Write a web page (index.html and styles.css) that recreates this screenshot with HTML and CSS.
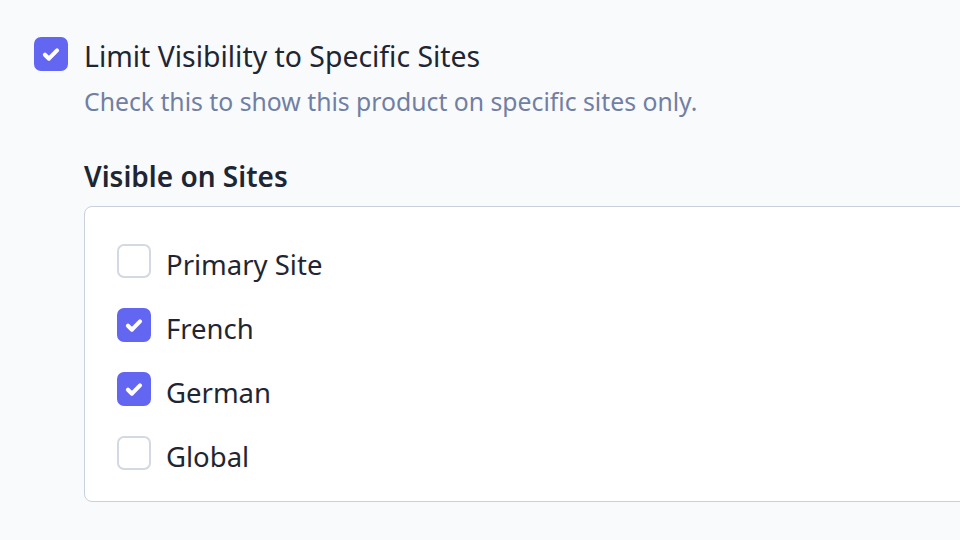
FILE: index.html
```html
<!DOCTYPE html>
<html lang="en">
<head>
<meta charset="utf-8">
<title>Site visibility</title>
<link rel="stylesheet" href="styles.css">
</head>
<body>
<div class="page">
  <label class="main-option">
    <span class="check checked">
      <svg viewBox="0 0 16 16" width="22" height="22"><path d="M3.6 8.5l2.9 2.9 5.9-6" fill="none" stroke="#fff" stroke-width="3" stroke-linecap="round" stroke-linejoin="round"/></svg>
    </span>
    <span class="main-label">Limit Visibility to Specific Sites</span>
  </label>
  <div class="details">
    <p class="hint">Check this to show this product on specific sites only.</p>
    <h3 class="section-title">Visible on Sites</h3>
    <div class="site-box">
      <label class="site-row">
        <span class="check"></span>
        <span class="site-label">Primary Site</span>
      </label>
      <label class="site-row">
        <span class="check checked">
          <svg viewBox="0 0 16 16" width="22" height="22"><path d="M3.6 8.5l2.9 2.9 5.9-6" fill="none" stroke="#fff" stroke-width="3" stroke-linecap="round" stroke-linejoin="round"/></svg>
        </span>
        <span class="site-label">French</span>
      </label>
      <label class="site-row">
        <span class="check checked">
          <svg viewBox="0 0 16 16" width="22" height="22"><path d="M3.6 8.5l2.9 2.9 5.9-6" fill="none" stroke="#fff" stroke-width="3" stroke-linecap="round" stroke-linejoin="round"/></svg>
        </span>
        <span class="site-label">German</span>
      </label>
      <label class="site-row">
        <span class="check"></span>
        <span class="site-label">Global</span>
      </label>
    </div>
  </div>
</div>
</body>
</html>
```
FILE: styles.css
```css
html, body {
  margin: 0;
  padding: 0;
  background: #f8fafc;
  overflow: hidden;
}
body {
  width: 960px;
  height: 540px;
  font-family: "Noto Sans", "Open Sans", sans-serif;
  color: #1f2633;
}
.page {
  padding: 36px 0 0 34px;
}
.main-option {
  display: flex;
  align-items: center;
  gap: 16px;
  height: 35px;
}
.check {
  box-sizing: border-box;
  width: 34px;
  height: 34px;
  flex: none;
  border-radius: 7px;
  border: 2px solid #d3d9e2;
  background: #fff;
  display: flex;
  align-items: center;
  justify-content: center;
}
.check.checked {
  background: #6366f1;
  border-color: #6366f1;
}
.main-label {
  font-size: 28.4px;
  line-height: 35px;
  position: relative;
  top: 3px;
}
.details {
  margin-left: 50px;
  width: 1000px;
}
.hint {
  margin: 16px 0 0;
  font-size: 24.75px;
  line-height: 30px;
  color: #717fa3;
}
.section-title {
  margin: 43px 0 0;
  font-size: 28px;
  line-height: 32px;
  font-weight: 600;
  color: #1f2633;
}
.site-box {
  margin-top: 14px;
  background: #fff;
  border: 1.5px solid #c9d0db;
  border-radius: 8px;
  padding: 37px 32px 31px;
  display: flex;
  flex-direction: column;
  gap: 30px;
}
.site-row {
  display: flex;
  align-items: center;
  gap: 15px;
  height: 34px;
}
.site-label {
  font-size: 27.5px;
  line-height: 34px;
  position: relative;
  top: 4px;
}
```
